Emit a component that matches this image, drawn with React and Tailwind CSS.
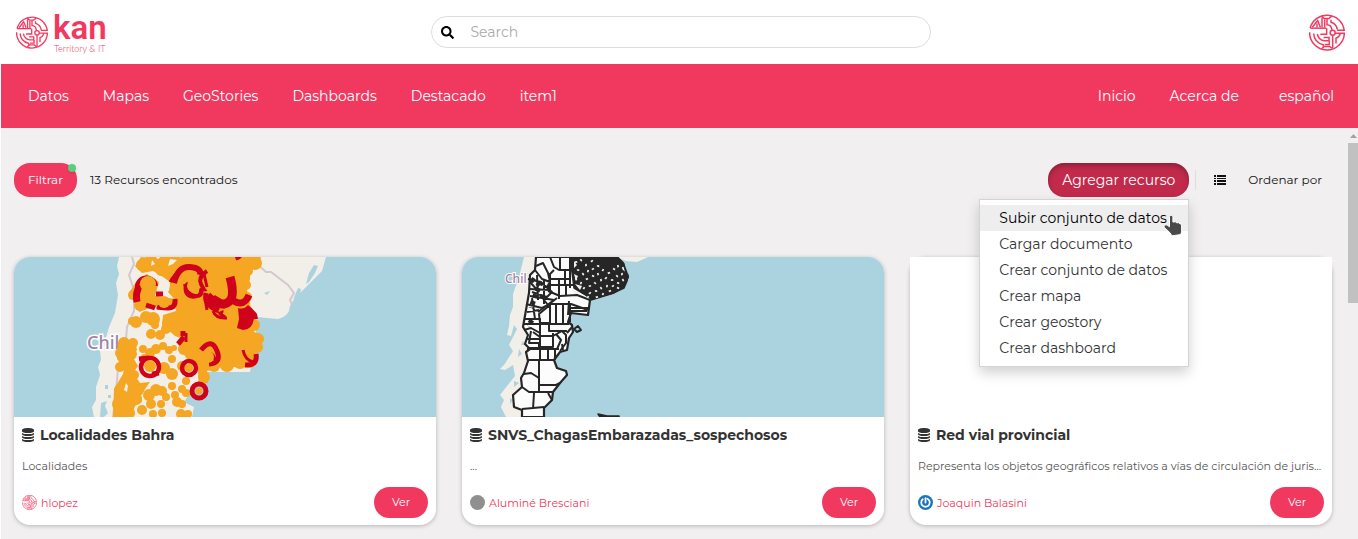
import React from "react";
import { FaSearch } from "react-icons/fa";

function Emblem({ className }) {
  return (
    <svg viewBox="0 0 108 110" className={className} fill="none" stroke="#f13960" strokeWidth="4.5" aria-hidden="true">
      <path d="M3.600 42A52 52 0 0 1 105.500 48H84" />
      <path d="M2 54A52 52 0 0 0 106 57H78" />
      <path d="M4 42H52" />
      <path d="M10 39L26 19L34 39M24 28V40" />
      <path d="M39 10V40M47 16V40" />
      <path d="M38 6L45 13H60L68 6" />
      <path d="M54 14V32C64 32 68 38 69 49" />
      <path d="M53 42V60H34" />
      <path d="M66 17V24C77 27 83 34 85 46" />
      <circle cx="71" cy="56" r="7.500" />
      <path d="M71 64V102" />
      <path d="M14 58C15 76 27 88 43 92V98" />
      <path d="M25 59C27 72 34 78 46 80H60V70H44" />
      <path d="M61 80V91H47" />
      <path d="M81 88V72C88 70 92 65 94 58" />
      <path d="M38 103L46 97H62L70 103" />
    </svg>
  );
}

function DatabaseIcon() {
  return (
    <svg viewBox="0 0 12 14" className="h-[14px] w-3 shrink-0" aria-hidden="true">
      <path fill="#333333" d="M6 0C9.300 0 12 .9 12 2V3.200C12 4.200 9.300 5 6 5S0 4.200 0 3.200V2C0 .9 2.700 0 6 0ZM0 4.900C1.200 5.700 3.400 6.100 6 6.100S10.800 5.700 12 4.900V6.200C12 7.200 9.300 8 6 8S0 7.200 0 6.200ZM0 7.900C1.200 8.700 3.400 9.100 6 9.100S10.800 8.700 12 7.900V9.200C12 10.200 9.300 11 6 11S0 10.200 0 9.200ZM0 10.900C1.200 11.700 3.400 12.100 6 12.100S10.800 11.700 12 10.900V12.200C12 13.200 9.300 14 6 14S0 13.200 0 12.200Z" />
    </svg>
  );
}

const orangeDots = [
  [128, 8, 6], [137, 3, 6], [150, 6, 7], [160, 2, 6], [147, 14, 5], [119, 38, 5], [126, 48, 6], [122, 65, 6], [118, 64, 4],
  [132, 60, 6], [139, 62, 7], [137, 77, 5], [146, 78, 5], [152, 72, 5], [141, 68, 4], [110, 86, 6], [119, 86, 5], [107, 96, 6],
  [117, 97, 6], [129, 92, 4], [136, 96, 5], [142, 92, 5], [130, 100, 3], [149, 89, 4], [155, 93, 4], [160, 91, 3], [158, 102, 4],
  [106, 110, 5], [115, 108, 7], [150, 111, 6], [158, 117, 6], [168, 109, 5], [120, 118, 5], [106, 133, 6], [118, 129, 7],
  [124, 133, 6], [105, 147, 7], [112, 141, 7], [122, 142, 6], [135, 138, 6], [142, 133, 6], [148, 134, 5], [152, 140, 4],
  [158, 129, 4], [161, 138, 4], [168, 132, 4], [172, 136, 4], [106, 157, 6], [115, 156, 6], [128, 153, 5], [137, 147, 5],
  [147, 147, 4], [148, 156, 4], [139, 157, 4], [163, 145, 5], [168, 147, 4], [167, 157, 5], [174, 157, 4], [172, 124, 4],
  [241, 6, 7], [234, 14, 5], [232, 28, 5], [233, 40, 5], [240, 68, 6], [244, 82, 6], [243, 90, 6], [236, 104, 7], [213, 108, 7],
  [226, 105, 7], [200, 109, 6], [190, 120, 6], [153, 66, 5], [170, 92, 6], [179, 102, 6],
];

function LocalidadesMap() {
  return (
    <svg viewBox="0 0 422 160" preserveAspectRatio="xMidYMid slice" className="block h-40 w-full rounded-t-2xl bg-[#aad3df]" role="img" aria-label="Mapa de localidades">
      <path fill="#f2efe9" d="M105 0L103 9L105 17L102 26L104 38L101 56L95 70L91 84L86 93L87 103L84 110L86 118L82 130L82 143L78 150L80 160H178L180 150L170 145L190 115H236L244 60L253 61L264 62Q272 60 275 54Q275 47 284 38L290 32L300 22L308 14L312 0Z" />
      <path fill="#aad3df" d="M91 128h3v4h-3zM94 138h3v3h-3zM87 146l6-2-2 5 3 7-4 4h-4zM300 8l4 1-3 7-6 9-3 2 3-11zM284 31l3 1-1 6-7 5zM250 36l6-2-3 4z" />
      <path fill="none" stroke="#d5c7ce" strokeWidth="2" d="M118 0L120 7L115 18L120 33L120 54L113 70L112 83M104 112L102 134L99 160M242 6L252 15H257L274 28L280 36L276 43L278 47" />
      <text x="73" y="92" fontFamily="Noto Sans" fontSize="18" fontWeight="500" fill="#9d84a3" stroke="#ffffff" strokeWidth="3" paintOrder="stroke">Chil</text>
      <g fill="#f5a623">
        <path d="M127 0L146 2L151 10H155L158 2L169 0H247L244 8L236 13L236 22L233 33L236 42L236 48L241 56L242 64L240 75L246 77L247 85L242 93L241 106L236 109L227 107L220 110L208 110L193 114L194 126L185 127L184 114L176 106L168 95L164 87L169 82L161 79L153 72L148 69L149 58L162 54L161 43L154 35L156 25L149 20L139 14L128 16L121 9Z" />
        <path d="M122 25L133 17L145 25L141 39L162 42L165 51L152 53L139 50L125 55L121 43L115 42V36Z" />
        <path d="M104 86L121 84L123 93L118 99L124 109L119 116L126 126L136 125L127 138L128 145L121 149L117 160H99L100 132L109 117L110 111L103 102Z" />
        {orangeDots.map(([x, y, r], i) => (
          <circle key={i} cx={x} cy={y} r={r} />
        ))}
      </g>
      <path fill="#f2efe9" d="M151 30L156 27L155 34L146 37ZM138 3L141 7L137 9ZM112 126L114 129L113 135L110 133ZM156 2L163 3L159 7L154 9Z" />
      <g fill="none" stroke="#d0021b" strokeLinecap="butt">
        <path strokeWidth="4" d="M123 31A9.500 9.500 0 1 1 142 29" />
        <path strokeWidth="7" d="M126 28Q121 36 123 45" />
        <path strokeWidth="6" d="M160 26Q164 9 176 10T186 18" />
        <path strokeWidth="3" d="M156 25Q166 8 180 11Q186 14 188 20M174 26A8 8 0 1 0 187 31" />
        <path strokeWidth="4" d="M171 27Q173 38 181 39T187 32M193 14Q184 20 187 27T192 32" />
        <path strokeWidth="5" d="M142 37L149 37M161 42Q162 51 154 51T143 50M132 48L141 51M192 36Q190 46 199 51T207 54" />
        <path strokeWidth="9" d="M193 39Q204 50 213 46T216 20" />
        <path strokeWidth="7" d="M199 41L212 49M220 44Q230 50 235 38" />
        <path strokeWidth="3" d="M199 54Q202 62 213 61M205 56L211 60M190 17L193 30M191 41L193 53" />
        <path strokeWidth="5" d="M187 93Q198 80 203 94Q208 106 195 107" />
        <path strokeWidth="3" d="M190 99Q199 93 201 103M229 93Q231 103 239 105" />
        <path strokeWidth="5" d="M242 97Q244 109 231 108M164 87L170 80M169 74V79" />
        <path strokeWidth="3" d="M172 76V85" />
        <ellipse cx="136" cy="110" rx="9" ry="9" strokeWidth="4.500" />
        <path strokeWidth="5" d="M125 102L135 101M138 117L145 116" />
        <circle cx="175" cy="111" r="7" strokeWidth="4.500" />
        <circle cx="185" cy="134" r="7" strokeWidth="5" />
      </g>
      <path fill="#d0021b" d="M224 51Q230 53 234 48Q240 53 243 57L244 62L240 62Q238 73 229 73L223 71L225 62ZM221 0H228Q225 4 222 3Z" />
      <g fill="#f5a623">
        <circle cx="134" cy="27" r="8" />
        <circle cx="136" cy="109" r="6" />
        <circle cx="175" cy="111" r="4" />
        <circle cx="185" cy="134" r="3.500" />
        <circle cx="179" cy="29" r="6" />
        <circle cx="194" cy="100" r="6" />
        <circle cx="206" cy="36" r="4" />
        <circle cx="150" cy="45" r="6" />
        <circle cx="171" cy="20" r="4" />
      </g>
    </svg>
  );
}

const denseCells = [
  [114, 5], [119, 3], [124, 8], [130, 4], [116, 13], [121, 17], [126, 14], [131, 12], [136, 9], [114, 22], [119, 26], [125, 22],
  [131, 19], [136, 17], [141, 13], [147, 16], [152, 12], [156, 9], [122, 31], [128, 29], [133, 26], [139, 23], [144, 21],
  [150, 23], [155, 19], [160, 17], [128, 36], [134, 34], [139, 31], [145, 29], [151, 29], [156, 26], [161, 23], [141, 37],
  [148, 34], [156, 31], [161, 11], [126, 40], [135, 40],
];

function ChagasMap() {
  return (
    <svg viewBox="0 0 422 160" preserveAspectRatio="xMidYMid slice" className="block h-40 w-full rounded-t-2xl bg-[#aad3df]" role="img" aria-label="Mapa de departamentos">
      <path fill="#f2efe9" d="M62 0L57 20L51 37L51 50L48 58L47 69L45 78L49 79L52 68L55 72L47 88L51 94L42 108L38 112L43 113L51 108L53 119L45 129L38 138L42 143L39 150L44 160H80L90 0ZM154 0L164 4L175 5L184 1L186 0Z" />
      <path fill="#aad3df" d="M57 92l3 5-4 3zM52 124l5 2-5 4zM48 141l3 2-3 4zM61 84l2 4-4 0z" />
      <text x="43" y="26" fontFamily="Noto Sans" fontSize="12" fontWeight="500" fill="#9d84a3" stroke="#ffffff" strokeWidth="2" paintOrder="stroke">Chil</text>
      <path fill="#fcfcfc" stroke="#262626" strokeWidth="2.200" strokeLinejoin="round" d="M74 0L73 13L68 18L67 36L64 53L61 70L66 78L63 87L68 92L64 95L66 104L62 116L59 121L60 130L51 138L52 150L60 153V160H82V151L90 143L91 135L98 126L105 118L104 114L95 111L92 103L98 95L105 93L107 81L111 75L110 68L106 65L109 56L126 58L128 43L151 36L161 30L166 20L161 6L155 0Z" />
      <g fill="none" stroke="#262626" strokeWidth="2" strokeLinejoin="round">
        <path d="M74 9L81 6L86 16L88 25L80 22L73 13M88 0L92 10L97 13H109M98 0V12M108 0V31M103 14V27M92 13L88 17V35M88 22H108M88 28H120M97 22V42M104 27V39M86 34L98 39L115 38L128 43" />
        <path d="M66 22L79 25L90 35L85 40L70 35M75 18L76 43M82 23V47M67 32L88 33M68 39L92 43L76 55M64 47L80 51L88 47H109L126 53M65 55L77 53M63 62H78V66M70 41L73 62M68 25L76 34M78 38L86 48L95 41" />
        <path d="M88 48V66H78L77 57L88 48M94 48V66M101 48V66M108 47V65M62 67H107M62 73L69 71L78 76M78 67V78M87 68V74H105M107 44L106 58M109 51H127M109 54H125" />
        <path d="M64 82H78M69 74L67 86H77V92H65M78 67V91L66 91M91 76V90H78M79 79H91L100 74L104 78V86L98 94M94 77L99 83L95 92M78 92H97M65 103H93M78 92V104M86 92V103M93 92V103M71 75L78 80" />
        <path d="M77 104V136M78 128H94L98 126M62 117L69 116L77 121M60 130L67 135H91M72 136L71 152M60 152L82 150M90 143L86 136M101 93L100 87M110 70L105 76" />
        <path d="M112 72L116 69L119 73L115 75Z" />
      </g>
      <path fill="#262626" stroke="#262626" strokeWidth="1.500" strokeLinejoin="round" d="M108 0H155L158 4L162 7L160 13L166 18L165 24L162 31L151 36L140 39L129 42L122 37L112 31ZM136 157L145 159H157V160H138Z" />
      <g fill="none" stroke="#262626" strokeWidth="5" strokeDasharray="4 3">
        <path d="M69 22L78 28L73 39L69 51M85 28L90 31M70 63L66 69" />
      </g>
      <g fill="#eeeeee">
        {denseCells.map(([x, y], i) => (
          <path key={i} transform={`translate(${x} ${y}) rotate(${(i * 47) % 180})`} d="M-1.200 -.7L1 -1L1.500 .8L-1 .9Z" />
        ))}
        <path d="M112 4L115 8L112 11ZM112 17L116 19L114 24ZM113 27L120 29L118 33ZM110 33L118 36L113 37Z" />
      </g>
    </svg>
  );
}

function GreyAvatar() {
  return <span className="size-[15px] rounded-full bg-[#8f8f8f]" />;
}

function PowerAvatar() {
  return (
    <svg viewBox="0 0 30 30" className="size-[15px]" fill="none" aria-hidden="true">
      <circle cx="15" cy="15" r="15" fill="#1b75bb" />
      <path d="M15 6V15M19 7.500A8.500 8.500 0 1 1 9.500 8.500" stroke="#ffffff" strokeWidth="3.500" strokeLinecap="round" />
    </svg>
  );
}

const cards = [
  { title: "Localidades Bahra", text: "Localidades", owner: "hlopez", avatar: <Emblem className="size-[15px]" />, picture: <LocalidadesMap /> },
  { title: "SNVS_ChagasEmbarazadas_sospechosos", text: "...", owner: "Aluminé Bresciani", avatar: <GreyAvatar />, picture: <ChagasMap /> },
  {
    title: "Red vial provincial",
    text: "Representa los objetos geográficos relativos a vías de circulación de jurisdicción provincial",
    owner: "Joaquin Balasini",
    avatar: <PowerAvatar />,
    picture: <div className="h-40 bg-white" />,
  },
];

function Card({ title, text, owner, avatar, picture }) {
  return (
    <article className="min-w-0 rounded-2xl bg-white shadow-[0_1px_4px_rgba(0,0,0,0.25)]">
      {picture}
      <div className="px-2 pt-2 pb-[7px]">
        <h2 className="flex items-center gap-[6px] text-[14px] leading-5 font-bold text-[#333333]">
          <DatabaseIcon />
          <span className="truncate">{title}</span>
        </h2>
        <p className="mt-3 truncate text-[11px] leading-[18px] text-[#555555]">{text}</p>
        <div className="mt-3 flex items-center justify-between">
          <a href="#perfil" className="flex items-center gap-1 text-[11px] leading-4 text-[#f13960]">
            {avatar}
            <span>{owner}</span>
          </a>
          <button type="button" className="h-[31px] w-[54px] rounded-2xl bg-[#f13960] text-[11px] text-white">
            Ver
          </button>
        </div>
      </div>
    </article>
  );
}

const navLeft = ["Datos", "Mapas", "GeoStories", "Dashboards", "Destacado", "item1"];
const menu = ["Subir conjunto de datos", "Cargar documento", "Crear conjunto de datos", "Crear mapa", "Crear geostory", "Crear dashboard"];

function ListIcon() {
  return (
    <svg viewBox="0 0 12 10" className="h-[10px] w-3" fill="#111111" aria-hidden="true">
      <path d="M0 0h2v2H0zM3 0h9v2H3zM0 3h2v1H0zM3 3h9v1H3zM0 5h2v2H0zM3 5h9v2H3zM0 8h2v2H0zM3 8h9v2H3z" />
    </svg>
  );
}

function Pointer() {
  return (
    <svg viewBox="0 0 20 23" className="pointer-events-none absolute top-[14px] right-[5px] h-[23px] w-5" aria-hidden="true">
      <path fill="#4a4a4a" stroke="#ffffff" strokeWidth="1" strokeLinejoin="round" d="M6.500 3.200C6.500 .8 9.900 .8 9.900 3.200V8L12.500 7.800L13.500 8.800L15.800 8.700L16.800 9.800L18.600 10.300V18L17.600 20.600L9 21.800L6.800 18.500L1 13.200C.5 11.200 2.600 10.200 4.300 11.200L6.500 12.800Z" />
    </svg>
  );
}

export default function App() {
  return (
    <div className="flex h-screen flex-col overflow-hidden bg-white pl-px font-['Montserrat','Inter',sans-serif] text-[#333333]">
      <header className="grid h-16 shrink-0 grid-cols-[1fr_minmax(0,500px)_1fr] items-center pr-[13px] pl-[15px]">
        <a href="#inicio" className="flex items-center gap-[5px]" aria-label="kan Territory & IT">
          <Emblem className="h-[33px] w-8" />
          <span className="flex flex-col text-[#f13960]">
            <span className="font-['Roboto',sans-serif] text-[33px] leading-[32px] font-semibold">kan</span>
            <span className="pl-px font-['Lato',sans-serif] text-[9px] leading-[9px] font-light whitespace-nowrap">Territory &amp; IT</span>
          </span>
        </a>
        <label className="flex h-8 items-center gap-[17px] rounded-full border border-[#dddddd] pr-4 pl-[9px]">
          <FaSearch className="size-[13px] shrink-0 text-black" />
          <input type="search" placeholder="Search" aria-label="Search" className="min-w-0 flex-1 bg-transparent text-[14px] outline-none placeholder:text-[#aaaaaa]" />
        </label>
        <button type="button" aria-label="Cuenta" className="justify-self-end">
          <Emblem className="h-[37px] w-9" />
        </button>
      </header>

      <nav className="flex h-16 shrink-0 items-center justify-between bg-[#f13960] pr-6 pl-[27px] text-[14px] leading-5 text-white">
        <div className="flex gap-[34px]">
          {navLeft.map((item) => (
            <a key={item} href={`#${item}`}>{item}</a>
          ))}
        </div>
        <div className="flex gap-[34px]">
          <a href="#inicio">Inicio</a>
          <a href="#acerca">Acerca de</a>
          <button type="button" className="ml-[6px]">español</button>
        </div>
      </nav>

      <div className="flex min-h-0 flex-1 bg-[#f1eff0]">
        <main className="min-w-0 flex-1 overflow-hidden pt-[35px] pr-4 pl-[13px]">
          <div className="flex items-center">
            <button type="button" className="relative h-[34px] w-[63px] rounded-2xl bg-[#f13960] text-[12px] text-white">
              Filtrar
              <span className="absolute top-px right-px size-2 rounded-full bg-[#58cf80] shadow-sm" />
            </button>
            <span className="ml-[13px] text-[12px] text-[#111111]">13 Recursos encontrados</span>

            <div className="relative ml-auto">
              <button type="button" aria-haspopup="menu" aria-expanded="true" className="h-[34px] w-[141px] rounded-2xl bg-[#c22a4c] text-[14px] text-white shadow-[inset_0_3px_5px_rgba(0,0,0,0.25)]">
                Agregar recurso
              </button>
              <ul role="menu" className="absolute top-[36px] right-0 z-10 w-[210px] border border-[#d4d4d4] bg-white py-[5px] text-[14px] leading-[26px] shadow-[0_6px_12px_rgba(0,0,0,0.18)]">
                {menu.map((item, i) => (
                  <li key={item} role="none">
                    <button type="button" role="menuitem" className={i === 0 ? "block w-full bg-[#eeeeee] pl-[19px] text-left text-black" : "block w-full pl-[19px] text-left"}>
                      {item}
                    </button>
                  </li>
                ))}
                <li role="none" aria-hidden="true"><Pointer /></li>
              </ul>
            </div>
            <span className="ml-[6px] h-5 w-px bg-[#dddddd]" />
            <button type="button" aria-label="Ver como lista" className="ml-[18px]">
              <ListIcon />
            </button>
            <button type="button" className="mr-[10px] ml-[22px] text-[12px] text-[#111111]">Ordenar por</button>
          </div>

          <section className="mt-[60px] grid grid-cols-3 gap-[26px]">
            {cards.map((card) => (
              <Card key={card.title} {...card} />
            ))}
          </section>
        </main>
        <div className="flex w-[10px] shrink-0 flex-col items-center" aria-hidden="true">
          <svg viewBox="0 0 10 15" className="h-[15px] w-full" fill="#a3a3a3">
            <path d="M2 10L5.500 6L9 10Z" />
          </svg>
          <span className="h-40 w-full bg-[#c1c1c1]" />
        </div>
      </div>
    </div>
  );
}
